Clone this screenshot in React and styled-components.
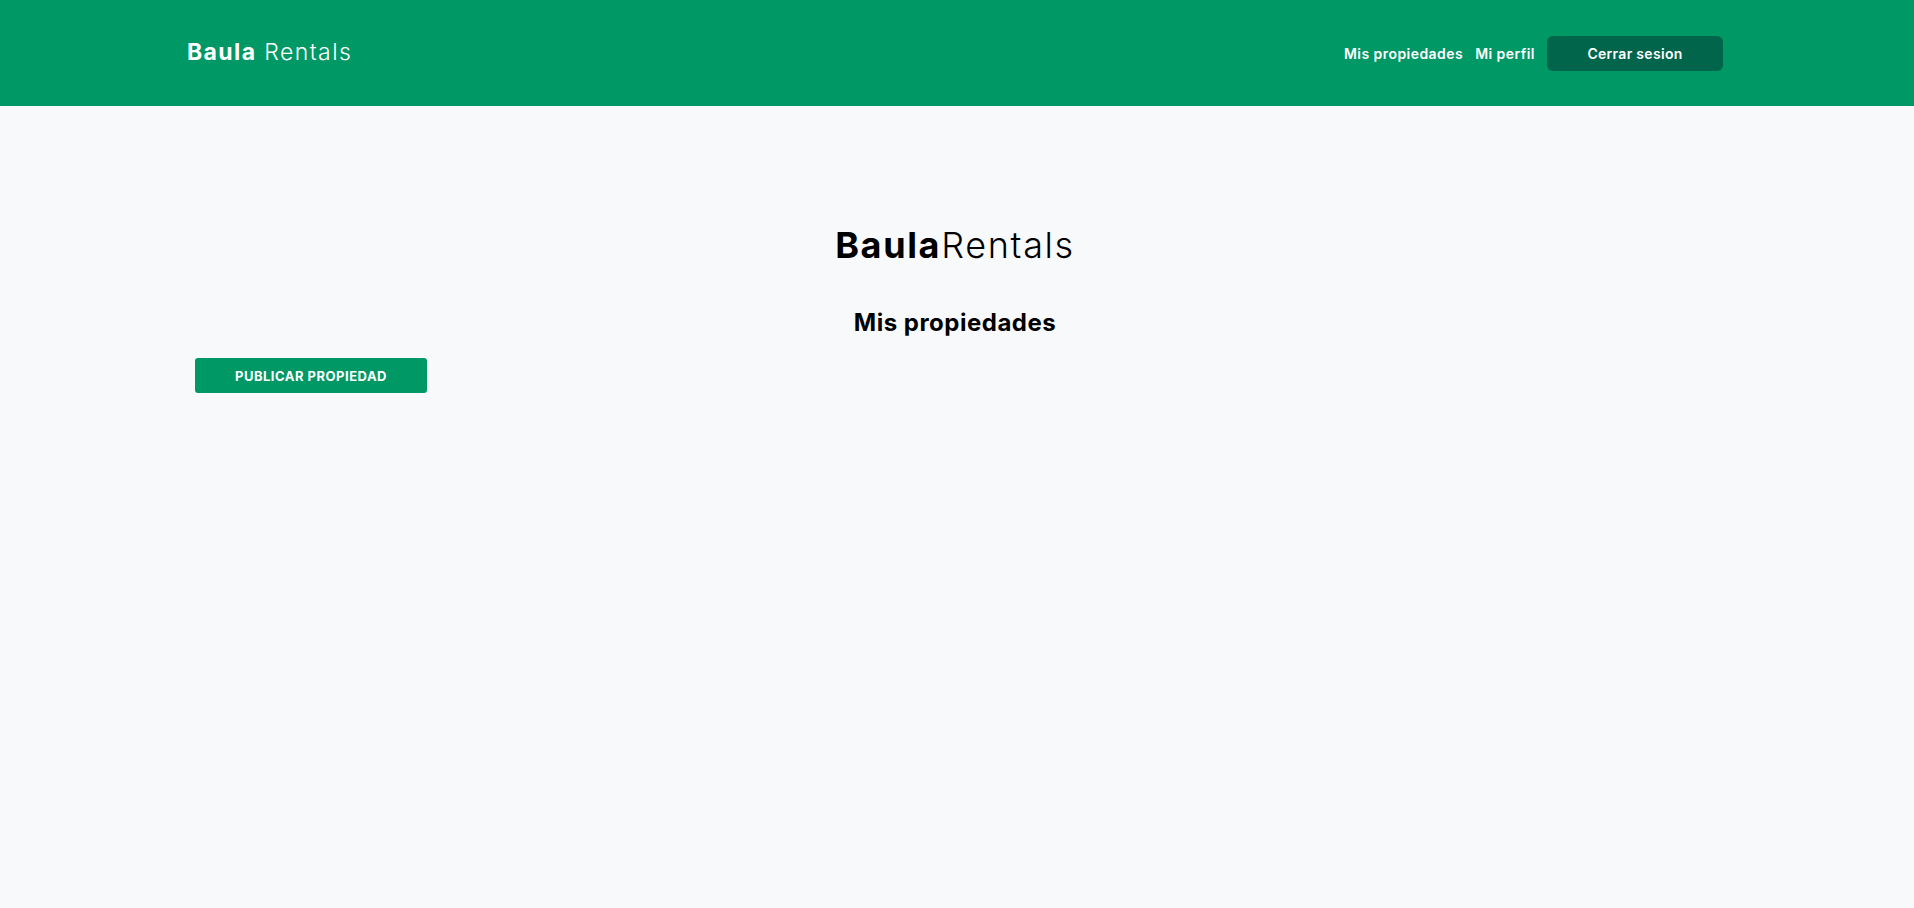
import styled, { createGlobalStyle } from "styled-components";

const GlobalStyle = createGlobalStyle`
  *, *::before, *::after {
    box-sizing: border-box;
  }
  body {
    margin: 0;
    background: #f8f9fb;
    font-family: Inter, "Noto Sans", sans-serif;
    color: #000;
  }
`;

const Header = styled.header`
  background-color: #009865;
  height: 106px;
`;

const HeaderInner = styled.div`
  max-width: 1540px;
  height: 100%;
  margin: 0 auto;
  padding-right: 4px;
  display: flex;
  align-items: center;
  justify-content: space-between;
`;

const Logo = styled.div`
  font-size: ${(p) => p.$size}px;
  color: ${(p) => p.$color};
  line-height: 1.2;
  letter-spacing: ${(p) => p.$spacing || 0}px;
  b {
    font-weight: 700;
  }
  span {
    font-weight: 300;
  }
`;

const Nav = styled.nav`
  display: flex;
  align-items: center;
  gap: 12px;
`;

const NavLink = styled.a`
  color: #fff;
  font-size: 14px;
  font-weight: 600;
  text-decoration: none;
  letter-spacing: 0.45px;
  cursor: pointer;
`;

const LogoutButton = styled.button`
  width: 176px;
  height: 35px;
  border: none;
  border-radius: 6px;
  background-color: #00654a;
  color: #fff;
  font-family: inherit;
  font-size: 14px;
  font-weight: 600;
  letter-spacing: 0.3px;
  cursor: pointer;
`;

const Main = styled.main`
  max-width: 1540px;
  margin: 0 auto;
  padding: 118px 4px 0 0;
  display: flex;
  flex-direction: column;
  align-items: center;
`;

const Title = styled.h2`
  margin: 40px 0 20px;
  font-size: 24px;
  font-weight: 700;
  line-height: 1.3;
  letter-spacing: 0.5px;
`;

const Actions = styled.div`
  align-self: stretch;
  display: flex;
  padding-left: 8px;
`;

const PublishButton = styled.button`
  width: 232px;
  height: 35px;
  border: none;
  border-radius: 3px;
  background-color: #009865;
  color: #fff;
  font-family: inherit;
  font-size: 13px;
  font-weight: 700;
  letter-spacing: 0.5px;
  cursor: pointer;
`;

const App = () => {
  return (
    <>
      <GlobalStyle />
      <Header>
        <HeaderInner>
          <Logo $size={23} $color="#fff" $spacing={1.4}>
            <b>Baula</b> <span>Rentals</span>
          </Logo>
          <Nav>
            <NavLink>Mis propiedades</NavLink>
            <NavLink>Mi perfil</NavLink>
            <LogoutButton>Cerrar sesion</LogoutButton>
          </Nav>
        </HeaderInner>
      </Header>
      <Main>
        <Logo $size={36} $color="#000" $spacing={1.65}>
          <b>Baula</b>
          <span>Rentals</span>
        </Logo>
        <Title>Mis propiedades</Title>
        <Actions>
          <PublishButton>PUBLICAR PROPIEDAD</PublishButton>
        </Actions>
      </Main>
    </>
  );
};

export default App;
